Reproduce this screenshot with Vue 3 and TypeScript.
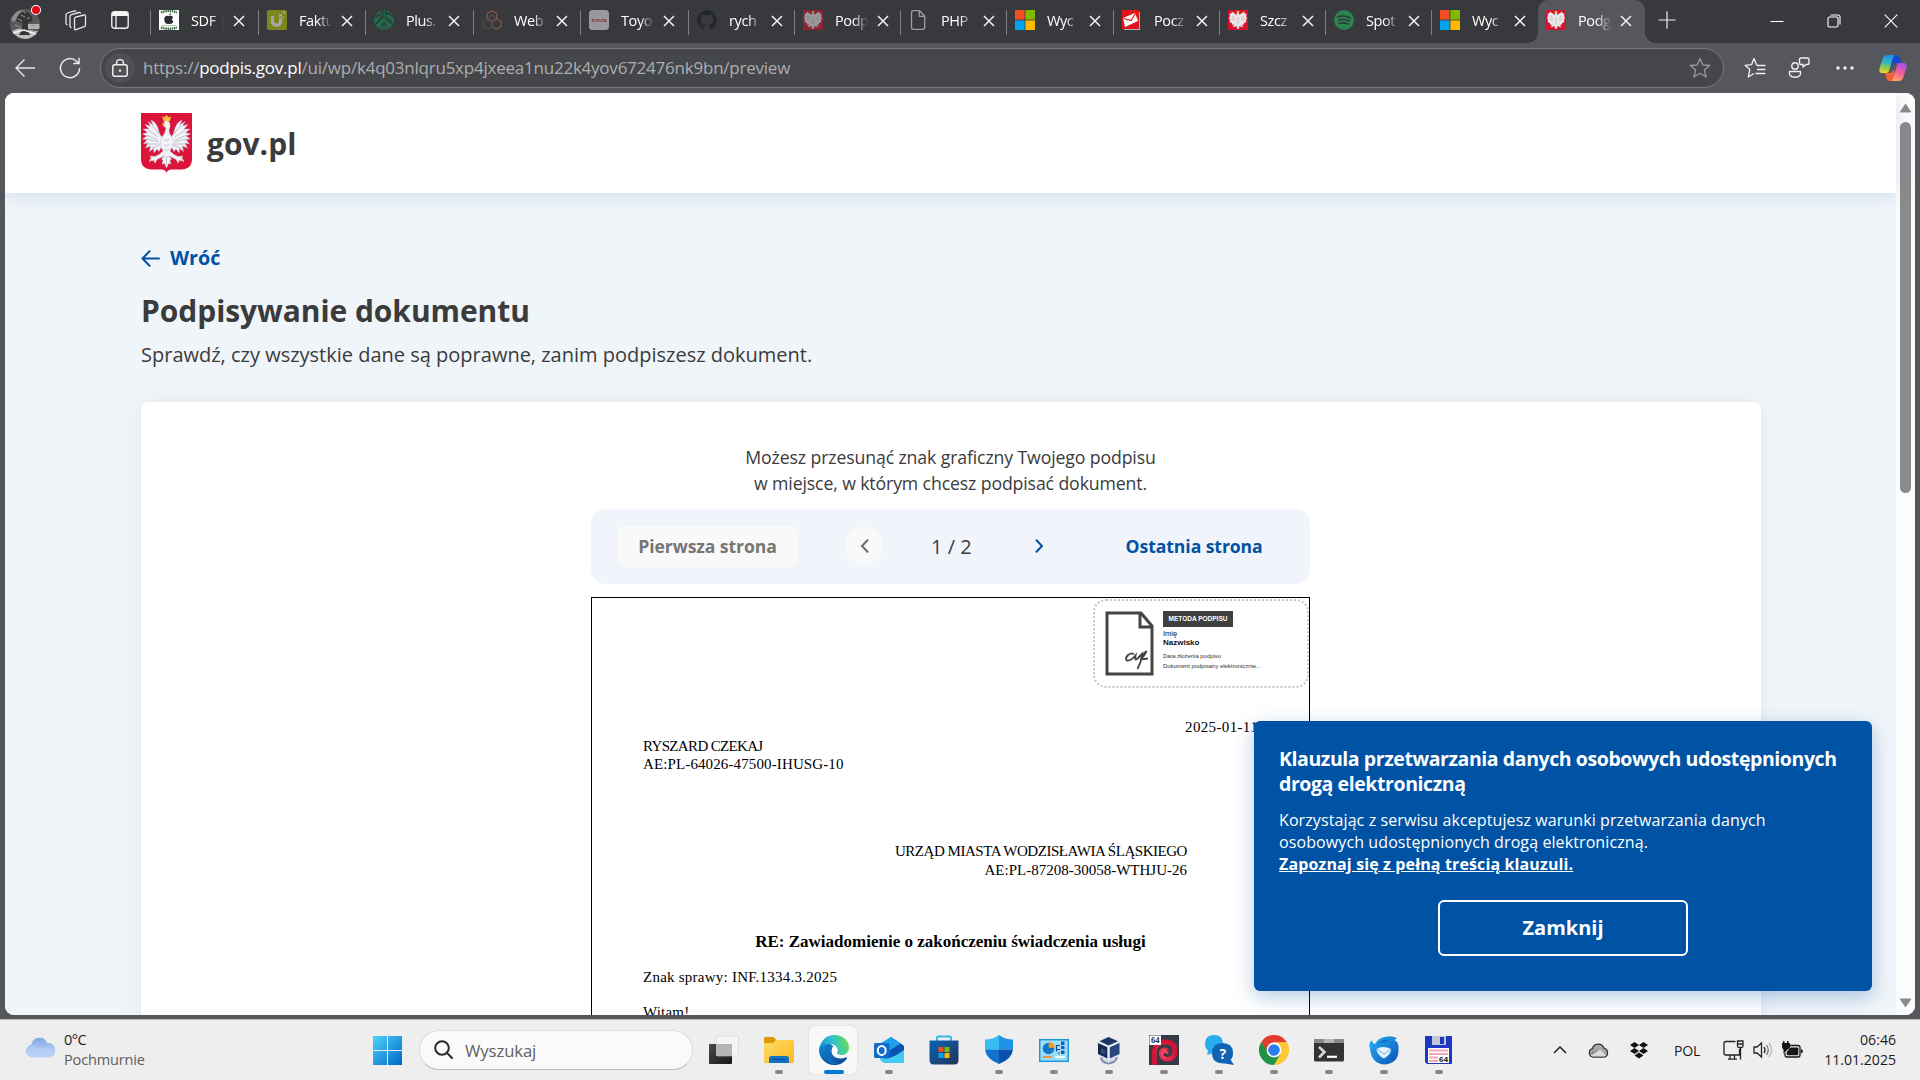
<script setup lang="ts">
interface Tab {
  title: string
  icon: string
  width: number
  dim?: boolean
}

const tabs: Tab[] = [
  { title: 'SDF |', icon: 'fav-apple', width: 108 },
  { title: 'Faktu', icon: 'fav-u', width: 107, dim: true },
  { title: 'Plus.|', icon: 'fav-plus', width: 108, dim: true },
  { title: 'Web', icon: 'fav-hex', width: 107, dim: true },
  { title: 'Toyo', icon: 'fav-toyota', width: 108, dim: true },
  { title: 'rych', icon: 'fav-github', width: 106 },
  { title: 'Podp', icon: 'fav-eagle', width: 106, dim: true },
  { title: 'PHP', icon: 'fav-page', width: 106 },
  { title: 'Wyc', icon: 'fav-ms', width: 107 },
  { title: 'Pocz', icon: 'fav-mail', width: 106 },
  { title: 'Szcz', icon: 'fav-eagle', width: 106 },
  { title: 'Spot', icon: 'fav-spotify', width: 106 },
  { title: 'Wyc', icon: 'fav-ms', width: 106 },
]

interface TaskApp {
  icon: string
  running: boolean
  active?: boolean
}

const apps: TaskApp[] = [
  { icon: 'app-taskview', running: false },
  { icon: 'app-explorer', running: true },
  { icon: 'app-edge', running: true, active: true },
  { icon: 'app-outlook', running: true },
  { icon: 'app-store', running: false },
  { icon: 'app-defender', running: true },
  { icon: 'app-control', running: true },
  { icon: 'app-vbox', running: true },
  { icon: 'app-64', running: true },
  { icon: 'app-help', running: true },
  { icon: 'app-chrome', running: true },
  { icon: 'app-terminal', running: true },
  { icon: 'app-thunderbird', running: true },
  { icon: 'app-floppy', running: true },
]
</script>

<template>
  <svg class="defs" width="0" height="0" aria-hidden="true">
    <defs>
      <linearGradient id="gStart" x1="0" y1="0" x2="1" y2="1"><stop offset="0" stop-color="#4fd3fb" /><stop offset="1" stop-color="#0067c5" /></linearGradient>
      <linearGradient id="gCloud" x1="0" y1="0" x2="0" y2="1"><stop offset="0" stop-color="#7ea6e8" /><stop offset="1" stop-color="#cfe0fa" /></linearGradient>
      <linearGradient id="gFolder" x1="0" y1="0" x2="1" y2="1"><stop offset="0" stop-color="#ffdc6b" /><stop offset="1" stop-color="#fbb91c" /></linearGradient>
      <linearGradient id="gEdgeTop" x1="0" y1="0.6" x2="1" y2="0.4"><stop offset="0" stop-color="#1a92d8" /><stop offset="0.5" stop-color="#2fc0cf" /><stop offset="1" stop-color="#6be04f" /></linearGradient>
      <linearGradient id="gEdgeBot" x1="0" y1="0" x2="0.6" y2="1"><stop offset="0" stop-color="#1590d8" /><stop offset="1" stop-color="#0f4c98" /></linearGradient>
      <linearGradient id="gStore" x1="0" y1="0" x2="1" y2="1"><stop offset="0" stop-color="#0b64b4" /><stop offset="1" stop-color="#253358" /></linearGradient>
      <linearGradient id="gThunder" x1="0" y1="0" x2="1" y2="1"><stop offset="0" stop-color="#29b3f5" /><stop offset="1" stop-color="#0b50b8" /></linearGradient>
      <linearGradient id="gTv" x1="0" y1="0" x2="1" y2="1"><stop offset="0" stop-color="#4a4a4a" /><stop offset="1" stop-color="#161616" /></linearGradient>
      <linearGradient id="gCopA" x1="0.4" y1="0" x2="0.3" y2="1"><stop offset="0" stop-color="#1b8fe8" /><stop offset="0.4" stop-color="#35b8c0" /><stop offset="0.7" stop-color="#8fca4c" /><stop offset="1" stop-color="#f5d31c" /></linearGradient>
      <linearGradient id="gCopB" x1="0.6" y1="0" x2="0.3" y2="1"><stop offset="0" stop-color="#a64fe8" /><stop offset="0.5" stop-color="#f25c9a" /><stop offset="1" stop-color="#fda968" /></linearGradient>
      <radialGradient id="gRed"><stop offset="0" stop-color="#ff4d6a" /><stop offset="1" stop-color="#cf1434" /></radialGradient>

      <symbol id="eagle" viewBox="0 0 51 60">
        <path d="M0 0H51V46Q51 56 40 56.5H30Q26 57 25.5 60Q25 57 21 56.5H11Q0 56 0 46Z" fill="#dc143c" />
        <g fill="#f4f4f8" stroke="#b9b7cb" stroke-width="0.5" stroke-linejoin="round">
          <path d="M22 25Q18 22 17 15Q15 9 10 7Q11 10 12 12L7 8.500L9.500 13L4 11.500L8 16L2 16L6.500 19.500L1.500 21L6 23L1.500 26L6 26.500L2.500 31L7 30L4.500 35L9.500 33L8.500 38.500L12.500 35.500L13 40L16 36L18 38.500L21 33Z" />
          <path d="M29 25Q33 22 34 15Q36 9 41 7Q40 10 39 12L44 8.500L41.500 13L47 11.500L43 16L49 16L44.500 19.500L49.500 21L45 23L49.500 26L45 26.500L48.500 31L44 30L46.500 35L41.500 33L42.500 38.500L38.500 35.500L38 40L35 36L33 38.500L30 33Z" />
          <path d="M24 42L20.500 46L22 47.500L21 51L23.500 50.500L25.500 55L27.500 50.500L30 51L29 47.500L30.500 46L27 42Z" />
          <path d="M23 9Q26 6 28.500 9.500Q30 13 28 17Q27.500 20 31 24Q33.500 31 29 38L33 41.500L37 43.500L42 43L40.500 45.500L43 48L38.500 47.500L37 50L35 46.500L27 42.500L25.500 45L24 42.500L16 46.500L14 50L12.500 47.500L8 48L10.500 45.500L9 43L14 43.500L18 41.500L22 38Q17.500 31 21 24Q24.500 20 25 15L22 12.500Z" />
        </g>
        <path d="M7 17L17 24M5 22L17 27M6 26L18 29M7 31L18 31M11 35L19 32M11 12L18 21M44 17L34 24M46 22L34 27M45 26L33 29M44 31L33 31M40 35L32 32M40 12L33 21M23 26L25.500 28L28 26M23 31L25.500 33L28 31M23 36L25.500 38L28 36M25.500 44V52" fill="none" stroke="#a9a9bf" stroke-width="0.7" />
        <path d="M21 3L23 4.500L25.500 2L28 4.500L30 3L29 8H22.500ZM20.500 11L24 9.800L23.500 12.500Z" fill="#f6c12f" />
        <path d="M10 44.500L8.500 49M41 44.500L42.500 49M13 47L14.500 50M38 47L36.500 50" stroke="#efc487" stroke-width="1" />
      </symbol>

      <symbol id="fav-apple" viewBox="0 0 20 20">
        <rect width="20" height="20" fill="#fff" />
        <path d="M2 2.500Q10-.5 18 2.500M2 17.500Q10 20 18 17.500" stroke="#3d6b45" stroke-width="2.400" fill="none" stroke-dasharray="1.500 .7" />
        <path d="M9.800 6.200C8 5.200 5.200 6 5.200 9.200S7.400 14.600 9.800 13.800C12 14.600 14 12.800 14.300 11.400C12.800 10.500 12.700 8.300 14.100 7.200C13 5.500 11.200 5.600 9.800 6.200ZM9.900 5.500Q10 3.500 12 2.900Q12 5 9.900 5.500Z" fill="#2b2d33" />
        <path d="M3 15.500H17" stroke="#b8cfae" stroke-width="1.200" />
      </symbol>
      <symbol id="fav-u" viewBox="0 0 20 20">
        <rect width="20" height="20" rx="2" fill="#b5c800" />
        <path d="M5.500 6V12A4.200 4.200 0 0 0 13.600 12V8" fill="none" stroke="#fff" stroke-width="3.200" />
        <path d="M12 4H15V7H12ZM16 1.500H18V3.500H16ZM15.500 6.500H17V8H15.500Z" fill="#fff" />
      </symbol>
      <symbol id="fav-plus" viewBox="0 0 20 20">
        <circle cx="10" cy="10" r="10" fill="#0e9a5b" />
        <path d="M1 8L9 1M3 12L9 6M8 8L1 15M11 1L19 7M11 6L18 12M12 9L19 15M6 18L10 12L14 18M9 0V9M11.500 0V9M2 6H9M11 5L16 3M10 14V20" stroke="#2d3834" stroke-width="1.100" fill="none" />
      </symbol>
      <symbol id="fav-hex" viewBox="0 0 20 20">
        <path d="M10 .8L14.800 3.500V9L10 11.800L5.200 9V3.500Z M14.500 8.500L19.200 11.200V16.500L14.500 19.200L9.800 16.500V11.200Z" fill="none" stroke="#d07a4c" stroke-width="1.100" />
        <path d="M5.500 8.500L10 11.200V16.500L5.500 19.200L1 16.500V11.200Z M10 5L13 6.700V10L10 11.800L7 10V6.700Z" fill="none" stroke="#6b5460" stroke-width="1.100" />
      </symbol>
      <symbol id="fav-toyota" viewBox="0 0 20 20">
        <rect width="20" height="20" rx="3.500" fill="#e8e8ea" />
        <text x="10" y="11.800" text-anchor="middle" textLength="16" font-size="4.400" font-weight="bold" font-family="Liberation Sans, sans-serif" fill="#d0142c">TOYOTA</text>
      </symbol>
      <symbol id="fav-github" viewBox="0 0 20 20">
        <path d="M10 .3A10 10 0 0 0 6.800 19.700C7.300 19.800 7.500 19.500 7.500 19.200V17.300C4.700 17.900 4.100 16 4.100 16C3.700 14.900 3 14.500 3 14.500C2.100 13.900 3.100 13.900 3.100 13.900C4.100 14 4.700 15 4.700 15C5.600 16.500 7 16.100 7.600 15.800C7.700 15.200 7.900 14.700 8.200 14.500C6 14.200 3.600 13.400 3.600 9.500C3.600 8.400 4 7.500 4.700 6.800C4.600 6.600 4.200 5.600 4.800 4.200C4.800 4.200 5.600 3.900 7.500 5.200A9 9 0 0 1 12.500 5.200C14.400 3.900 15.200 4.200 15.200 4.200C15.800 5.600 15.400 6.600 15.300 6.800C16 7.500 16.400 8.400 16.400 9.500C16.400 13.400 14 14.200 11.800 14.500C12.200 14.800 12.500 15.400 12.500 16.300V19.200C12.500 19.500 12.700 19.800 13.200 19.700A10 10 0 0 0 10 .3Z" fill="#22262b" />
      </symbol>
      <symbol id="fav-eagle" viewBox="0 0 20 20">
        <rect width="20" height="20" fill="#d5122f" />
        <path d="M8.600 5Q7 3 3.600 1.500L3.800 3L1.500 4L2 6L1 8L2 10L1.700 12L3.700 13L4.500 15L6.500 14.500L4.500 17L7 16.800L9 16L8.500 18L10 19L11.500 18L11 16L13 16.800L15.500 17L13.500 14.500L15.500 15L16.300 13L18.300 12L18 10L19 8L18 6L18.500 4L16.200 3L16.400 1.500Q13 3 11.400 5L11 2.500L9 2.500Z" fill="#e9e6e8" />
        <path d="M4 6L7 8M3.500 9L7 10M16 6L13 8M16.500 9L13 10M10 7V14" stroke="#c3a9b0" stroke-width=".7" />
        <path d="M8.500 1H11.500L11 3H9Z" fill="#e9bf3a" />
      </symbol>
      <symbol id="fav-page" viewBox="0 0 20 20">
        <path d="M4.500 .7H10.500L15.700 6V17.300A2 2 0 0 1 13.700 19.300H4.500A2 2 0 0 1 2.500 17.300V2.700A2 2 0 0 1 4.500 .7ZM10.300 1V6.300H15.500" fill="none" stroke="#9c9da0" stroke-width="1.300" />
      </symbol>
      <symbol id="fav-ms" viewBox="0 0 20 20">
        <path d="M0 0H9.600V9.600H0Z" fill="#f25022" /><path d="M10.400 0H20V9.600H10.400Z" fill="#7fba00" /><path d="M0 10.400H9.600V20H0Z" fill="#00a4ef" /><path d="M10.400 10.400H20V20H10.400Z" fill="#ffb900" />
      </symbol>
      <symbol id="fav-mail" viewBox="0 0 20 20">
        <path d="M2 2H18V20H2Z" fill="#a9b4bb" /><path d="M0 0H17V19H0Z" fill="#e41219" />
        <path d="M1 8L13 3L16 11L3 17Z" fill="#fff" /><path d="M1.500 8.500L9 10.500L13.500 3.500" stroke="#e41219" stroke-width="1.200" fill="none" />
      </symbol>
      <symbol id="fav-spotify" viewBox="0 0 20 20">
        <circle cx="10" cy="10" r="10" fill="#2b8350" />
        <path d="M4 6.800Q10.500 4.800 16 7.800M4.600 10.200Q10.300 8.500 15.200 11M5.200 13.300Q10 12 14.200 14.100" stroke="#34393b" stroke-width="1.700" fill="none" stroke-linecap="round" />
      </symbol>

      <symbol id="app-taskview" viewBox="0 0 30 30">
        <rect x="0" y="9" width="23" height="20" rx="1" fill="url(#gTv)" />
        <rect x="7.500" y="1" width="22" height="20" rx="1" fill="#f5f5f5" stroke="#d2d2d2" stroke-width=".6" />
        <rect x="7.500" y="9" width="15.500" height="12" fill="#b5b5b5" />
      </symbol>
      <symbol id="app-explorer" viewBox="0 0 30 30">
        <path d="M0 3.500Q0 2 1.500 2H9.500L13 5.500V10H0Z" fill="#dd9a06" />
        <path d="M0 8H9L12 5H28.500Q30 5 30 6.500V26.500Q30 28 28.500 28H1.500Q0 28 0 26.500Z" fill="url(#gFolder)" />
        <path d="M5 28V23.500Q5 21 7.500 21H22.500Q25 21 25 23.500V28Z" fill="#1272c4" /><path d="M8.500 24.500H21.500" stroke="#0b4d91" stroke-width="1.300" />
      </symbol>
      <symbol id="app-edge" viewBox="0 0 30 30">
        <path d="M0 14.500A15 15 0 0 0 15.500 30C21.500 30 25.800 27 28 23.200C28.400 22.300 27.500 22 26.800 22.400C21 25 12.700 22.700 12.700 16.800C12.700 14.500 13.500 12.500 14.500 11.500C10 6 1 7 0 14.500Z" fill="url(#gEdgeBot)" />
        <path d="M0 14.500C1 6 7.500 0 15.500 0C24 0 30 6 30 12.500C30 17.500 26.500 20 22.500 20C19 20 17.200 18.800 17.800 17.600C18.400 16.800 18.600 16 18.600 15.300C18.600 11.800 15.600 8.800 10.500 8.800C4 8.800 .6 11.800 0 14.500Z" fill="url(#gEdgeTop)" />
        <path d="M5.500 21C3.500 15 7 9.500 12.500 9.200C8.800 12 8.500 20 14 25.500C16 27.500 19 28 21 28C14 31.500 7.500 27.500 5.500 21Z" fill="#0d6fc0" opacity=".8" />
        <path d="M14.500 11.200C18 12 19.500 15.500 18 17.500Q17.200 19 20 19.700C17 21 12.500 19 12.700 15.500Q12.800 12.500 14.500 11.200Z" fill="#fff" />
      </symbol>
      <symbol id="app-outlook" viewBox="0 0 30 30">
        <path d="M6 12L17 2L30 11V25Q30 28 27 28H12Q6 26 6 22Z" fill="#0a3f93" />
        <path d="M7 8L17 2L27 8.500L15 16Z" fill="#1d9fea" /><path d="M14 17L27 8.500L30 12V16L16 23Z" fill="#0a52b5" />
        <path d="M6 22Q14 27 30 15V25Q30 28 27 28H14Q6 28 6 22Z" fill="#45ccf5" />
        <rect x="0" y="8" width="15.500" height="15" rx="1.500" fill="#0f6cc8" />
        <ellipse cx="7.700" cy="15.500" rx="4" ry="4.500" fill="none" stroke="#fff" stroke-width="2" />
      </symbol>
      <symbol id="app-store" viewBox="0 0 30 30">
        <path d="M8 7V3Q8 1.500 9.500 1.500H20.500Q22 1.500 22 3V7" fill="none" stroke="#38b8ef" stroke-width="2" />
        <path d="M.5 5.500H29.500V25Q29.500 29.500 25 29.500H5Q.5 29.500 .5 25Z" fill="url(#gStore)" />
        <path d="M9.500 12H14.500V17H9.500Z" fill="#f25022" /><path d="M15.500 12H20.500V17H15.500Z" fill="#7fba00" /><path d="M9.500 18H14.500V23H9.500Z" fill="#00a4ef" /><path d="M15.500 18H20.500V23H15.500Z" fill="#ffb900" />
      </symbol>
      <symbol id="app-defender" viewBox="0 0 30 30">
        <path d="M15 0Q21 4.500 29 4.500V14.500H15Z" fill="#1c93e3" /><path d="M15 0Q9 4.500 1 4.500V14.500H15Z" fill="#37bdf3" />
        <path d="M1 14.500H15V29Q2 24 1 14.500Z" fill="#1173cf" /><path d="M29 14.500H15V29Q28 24 29 14.500Z" fill="#0a52ad" />
      </symbol>
      <symbol id="app-control" viewBox="0 0 30 30">
        <rect x=".7" y="4.700" width="28.600" height="21.600" fill="#9fdcf8" stroke="#1d9ad6" stroke-width="1.500" />
        <circle cx="9.500" cy="13.500" r="5.800" fill="#1377c9" /><path d="M9.500 13V7A6 6 0 0 1 15.500 13Z" fill="#f79a23" transform="translate(.3,-.3)" />
        <path d="M18 10.500H21M18 14.500H21M19 18H21M17.500 16.500V10" stroke="#124d91" fill="none" stroke-width="1.200" /><path d="M22 6.500H25.500V10H22ZM22 11H25.500V14H22ZM22 15.500H25.500V19H22Z" fill="#1260ad" />
        <path d="M4 22H13" stroke="#ee8a1c" stroke-width="1.600" /><path d="M16 22H26" stroke="#fff" stroke-width="1.600" /><path d="M14.500 20V24" stroke="#f3b873" />
      </symbol>
      <symbol id="app-vbox" viewBox="0 0 30 30">
        <path d="M6 22Q6 29 14.500 29.500Q23 29 24 22Z" fill="#8995b0" /><path d="M9 24L14.500 27L21 24" fill="none" stroke="#dfe4ee" stroke-width="1.500" />
        <path d="M14.500 .5L27 6V20L14.500 26L2.500 20V6Z" fill="#e7eaf1" />
        <path d="M14.500 2L24 6.200L14.500 10.500L5.500 6.200Z" fill="#1c3764" /><path d="M4 8L13.300 12.300V23.500L4 19Z" fill="#142950" /><path d="M25.500 8L15.800 12.300V23.500L25.500 19Z" fill="#27477d" />
        <path d="M7 13L11 15V20L7 18Z" fill="#2e4c7d" />
      </symbol>
      <symbol id="app-64" viewBox="0 0 30 30">
        <rect width="30" height="30" fill="#343a46" />
        <path d="M6 30Q2 9 14 7Q26 6 26 16Q25.500 25 17.500 24Q12 22.500 12.500 17.500Q14 14 17.500 15.500Q19.500 17 18 19" fill="none" stroke="url(#gRed)" stroke-width="5" />
        <path d="M18.500 15Q22 17 19.500 20.500Q17 22 14.500 19.500" fill="none" stroke="#343a46" stroke-width="1.500" />
        <rect x=".5" y=".5" width="11.500" height="9.500" fill="#fff" /><text x="6.200" y="8.300" text-anchor="middle" font-size="8.500" font-weight="bold" font-family="Liberation Serif, serif" fill="#222">64</text>
      </symbol>
      <symbol id="app-help" viewBox="0 0 30 30">
        <path d="M1 9Q1 0 10 0T19 9Q19 18 10 18L3 20Q4 16 4 15.500Q1 13 1 9Z" fill="#27aeea" />
        <path d="M8 18Q8 8 18.500 8T29 18Q29 23 26.500 24.500L30 30L21 28.500Q8 29 8 18Z" fill="#1164b4" />
        <text x="18.800" y="23.500" text-anchor="middle" font-size="14" font-weight="bold" font-family="Open Sans, sans-serif" fill="#fff">?</text>
      </symbol>
      <symbol id="app-chrome" viewBox="0 0 30 30">
        <path d="M2 7.500A15 15 0 0 1 28 7.500H15L9 18Z" fill="#e33b2e" /><path d="M28 7.500A15 15 0 0 1 15 30L21.500 18.500L21 8Z" fill="#fcc934" /><path d="M2 7.500A15 15 0 0 0 15 30L21.500 18.700L12 20Z" fill="#1e9447" />
        <path d="M15 7.500H28L21 19Z" fill="#fcc934" /><circle cx="15" cy="15" r="7.400" fill="#fff" /><circle cx="15" cy="15" r="5.800" fill="#2b7de9" />
      </symbol>
      <symbol id="app-terminal" viewBox="0 0 30 30">
        <rect y="4" width="30" height="22.500" rx="1.500" fill="#333" /><path d="M1.500 4H28.500Q30 4 30 5.500V8H0V5.500Q0 4 1.500 4Z" fill="#8a8a8a" /><path d="M10 4H20V8H10Z" fill="#b4b4b4" />
        <path d="M5 12L10.500 17L5 22.500" fill="none" stroke="#d8d8d8" stroke-width="2.500" /><path d="M13 21.800H23" stroke="#fff" stroke-width="2.200" />
      </symbol>
      <symbol id="app-thunderbird" viewBox="0 0 30 30">
        <path d="M1 13Q-1 8 3 5Q3 8 6 9Q9 3 16 2Q22 0 28 3L25.500 5Q30 7 29.500 14Q30 28 16 29.500Q2 29 1 13Z" fill="url(#gThunder)" />
        <path d="M7.500 14Q14 10 22 14Q22.500 19 15 23.500Q8 20 7.500 14Z" fill="#e8f3fd" /><path d="M8 14L15 19L22 14" fill="none" stroke="#9cc8ee" stroke-width="1.500" /><path d="M10 8Q15 3 20 5Q16 8 10 8Z" fill="#1266c5" />
      </symbol>
      <symbol id="app-floppy" viewBox="0 0 30 30">
        <path d="M1 1H28V29H3L1 27Z" fill="#1b37c4" /><path d="M8 1H22V10H8Z" fill="#c3c7d1" /><path d="M16 2H20V9H16Z" fill="#1b37c4" />
        <path d="M4 13H25V28H4Z" fill="#fff" /><path d="M5 15.500H24M5 19H24M5 22.500H14M5 26H14" stroke="#f3a7b0" stroke-width="1.800" />
        <text x="19.500" y="27" text-anchor="middle" font-size="8" font-weight="bold" font-family="Liberation Mono, monospace" fill="#111">64</text>
      </symbol>
    </defs>
  </svg>

  <div class="screen">
    <header class="tabstrip">
      <svg class="avatar" width="32" height="34" viewBox="0 0 32 34">
        <circle cx="15" cy="15" r="15" transform="translate(0,4)" fill="#5a5a5a" />
        <path d="M2 26Q10 22 15 24T28 26Q23 34 15 34Q6 33 2 26Z" fill="#bdbdbd" />
        <path d="M18 19H29Q30 22 29 24H18Z" fill="#b2b2b2" /><path d="M1 14Q5 6 12 5L10 13L3 17Z" fill="#8d8d8d" />
        <path d="M10 8Q16 4 20 9Q23 11 22 16L18 18Q17 24 20 30H9Q13 24 12 18L6 16Q7 11 10 8Z" fill="#343434" />
        <path d="M11 10L15 12M17 14L20 12M8 14L12 16M21 21L26 20M5 20L10 22M20 25L26 27M13 6L16 8" stroke="#9a9a9a" /><path d="M3 28L14 25L26 29" stroke="#eee" stroke-width="1.500" fill="none" />
        <circle cx="26" cy="5" r="5" fill="#fff" /><circle cx="26" cy="5" r="4" fill="#e30613" />
      </svg>
      <svg class="workspaces" width="22" height="22" viewBox="0 0 22 22" fill="none" stroke="#e8e8e8" stroke-width="1.300" stroke-linejoin="round">
        <path d="M9.500 8.500Q9.500 7.500 10.500 7.200L19 5Q20.500 4.800 20.500 6V15Q20.500 16.300 19.300 16.700L11 19.700Q9.500 20 9.500 18.700Z" />
        <path d="M6.500 17.500Q5 17.500 5 16V6.500Q5 5 6.500 4.600L14 2.500Q15.500 2.300 15.800 3.500M2.500 15Q1 14.500 1 13V5Q1 3.500 2.500 3L9.500 .9Q10.500 .7 11.200 1.500" />
      </svg>
      <svg class="tabactions" width="18" height="18" viewBox="0 0 18 18"><rect x=".8" y=".8" width="16.400" height="16.400" rx="2.500" fill="none" stroke="#f0f0f0" stroke-width="1.400" /><path d="M1 5V3Q1 1 3 1H15Q17 1 17 3V5Z" fill="#f4f4f4" /><path d="M5 5V17" stroke="#f0f0f0" stroke-width="1.300" /></svg>
      <div class="tabs">
        <div v-for="(tab, i) in tabs" :key="i" class="tab" :style="{ width: tab.width + 'px' }">
          <svg class="favicon" :class="{ dim: tab.dim }" width="20" height="20"><use :href="'#' + tab.icon" /></svg>
          <span class="tab-title">{{ tab.title }}</span>
          <svg class="close" width="12" height="12" viewBox="0 0 12 12"><path d="M1 1L11 11M11 1L1 11" stroke="#f2f2f2" stroke-width="1.500" /></svg>
        </div>
        <div class="tab current">
          <svg class="favicon" width="20" height="20"><use href="#fav-eagle" /></svg>
          <span class="tab-title">Podg</span>
          <svg class="close" width="12" height="12" viewBox="0 0 12 12"><path d="M1 1L11 11M11 1L1 11" stroke="#f2f2f2" stroke-width="1.500" /></svg>
        </div>
      </div>
      <svg class="newtab" width="18" height="18" viewBox="0 0 18 18"><path d="M9 .5V17.500M.5 9H17.500" stroke="#f0f0f0" stroke-width="1.200" /></svg>
      <div class="window-controls">
        <svg width="14" height="14" viewBox="0 0 14 14"><path d="M.5 7.500H13.500" stroke="#fff" stroke-width="1.100" /></svg>
        <svg width="14" height="14" viewBox="0 0 14 14" fill="none" stroke="#fff" stroke-width="1.100"><rect x="1" y="3" width="10" height="10" rx="1.500" /><path d="M3.500 1H11Q13 1 13 3V10.500" /></svg>
        <svg width="14" height="14" viewBox="0 0 14 14"><path d="M.7 .7L13.300 13.300M13.300 .7L.7 13.300" stroke="#fff" stroke-width="1.100" /></svg>
      </div>
    </header>

    <div class="toolbar">
      <svg class="back" width="20" height="20" viewBox="0 0 20 20" fill="none" stroke="#e8e8e8" stroke-width="1.400"><path d="M20 10H1M9.500 1.500L1 10L9.500 18.500" /></svg>
      <svg class="reload" width="22" height="22" viewBox="0 0 22 22" fill="none" stroke="#e8e8e8" stroke-width="1.500"><path d="M20.500 11A9.500 9.500 0 1 1 17.500 4.200L19.500 6.200M20 .8V6.500H14.300" /></svg>
      <div class="address">
        <span class="site-info"><svg width="16" height="19" viewBox="0 0 16 19" fill="none" stroke="#f0f0f0" stroke-width="1.500"><rect x=".8" y="5.800" width="14.400" height="11.400" rx="2" /><path d="M4.500 5.500V4A3.500 3.500 0 0 1 11.500 4V5.500" /><circle cx="8" cy="11.500" r="1.200" fill="#f0f0f0" stroke="none" /></svg></span>
        <span class="url">https://<b>podpis.gov.pl</b>/ui/wp/k4q03nlqru5xp4jxeea1nu22k4yov672476nk9bn/preview</span>
        <svg class="star" width="22" height="22" viewBox="0 0 22 22"><path d="M11 1.500L13.800 8L20.700 8.500L15.400 13L17.100 20L11 16.300L4.900 20L6.600 13L1.300 8.500L8.200 8Z" fill="none" stroke="#97989b" stroke-width="1.300" stroke-linejoin="round" /></svg>
      </div>
      <svg class="favs" width="22" height="22" viewBox="0 0 22 22" fill="none" stroke="#f0f0f0" stroke-width="1.300" stroke-linejoin="round" stroke-linecap="round"><path d="M14 8.500L12.700 8L10 1.500L7.500 7.700L1 8.300L5.800 12.600L4.300 20L9.500 16.800M13.500 8.500H21M13.500 12.500H21M12 16.500H21" /></svg>
      <svg class="people" width="22" height="22" viewBox="0 0 22 22" fill="none" stroke="#f0f0f0" stroke-width="1.400" stroke-linejoin="round"><circle cx="7" cy="9" r="3.200" /><path d="M1.500 14.500H12.500Q13.500 20.300 7 20.300T1.500 14.500ZM13 1H19.500Q21 1 21 2.500V6Q21 7.500 19.500 7.500H18L15 10V7.500H13Q11.500 7.500 11.500 6V2.500Q11.500 1 13 1Z" /></svg>
      <svg class="dots" width="18" height="4" viewBox="0 0 18 4" fill="#f4f4f4"><circle cx="2" cy="2" r="1.700" /><circle cx="9" cy="2" r="1.700" /><circle cx="16" cy="2" r="1.700" /></svg>
      <svg class="copilot" width="28" height="26" viewBox="0 0 28 26">
        <path d="M13 0H18Q20.500 .5 21.500 5L22.500 8H17Q14 8 13 12L9 0Z" fill="#1746c8" /><path d="M15 26H10Q7.500 25 6.800 21L6 18H11Q13 18 14.500 14L18 26Z" fill="#f2603a" />
        <path d="M8 0H16Q14.500 1 13.500 4L10 16Q9.500 18 7.500 18H3Q-.5 18 .5 13.500L3.500 4Q5 0 8 0Z" fill="url(#gCopA)" />
        <path d="M20 26H12.500Q14 25 14.500 22L18 10Q18.800 8 20.500 8H25Q28.500 8.300 27.500 12.500L24.500 22Q23 26 20 26Z" fill="url(#gCopB)" />
      </svg>
    </div>

    <div class="frame">
      <div class="viewport">
        <div class="page">
          <div class="site-header">
            <svg width="51" height="60"><use href="#eagle" /></svg>
            <span class="brand">gov.pl</span>
          </div>
          <main>
            <a class="backlink"><svg width="19" height="17" viewBox="0 0 19 17" fill="none" stroke="#0052a5" stroke-width="2" stroke-linecap="round" stroke-linejoin="round"><path d="M18 8.500H1.500M8.500 1.300L1.500 8.500L8.500 15.700" /></svg><span>Wróć</span></a>
            <h1>Podpisywanie dokumentu</h1>
            <p class="lead">Sprawdź, czy wszystkie dane są poprawne, zanim podpiszesz dokument.</p>
            <section class="card">
              <p class="hint">Możesz przesunąć znak graficzny Twojego podpisu<br />w miejsce, w którym chcesz podpisać dokument.</p>
              <nav class="pager">
                <span class="first">Pierwsza strona</span>
                <span class="prev"><svg width="9" height="14" viewBox="0 0 9 14"><path d="M7.500 1.200L2 7L7.500 12.800" fill="none" stroke="#6c6c6c" stroke-width="2" stroke-linecap="round" /></svg></span>
                <span class="count">1 / 2</span>
                <svg class="next" width="9" height="14" viewBox="0 0 9 14"><path d="M1.500 1.200L7 7L1.500 12.800" fill="none" stroke="#0052a5" stroke-width="2" stroke-linecap="round" /></svg>
                <span class="last">Ostatnia strona</span>
              </nav>
              <article class="doc">
                <div class="stamp">
                  <svg width="50" height="66" viewBox="0 0 50 66" fill="none" stroke="#444" stroke-width="3"><path d="M2 2H36L47 15V63H2ZM35 2V16H47" /><path d="M29 43.500Q27 41 23 44Q19.500 48 22 49.500Q26 50 30.500 44.500Q29.500 50 32 48L37 43L36.500 46.500Q38.500 46.500 41.500 40Q37 44 35.500 51L32.500 58M35 48.500L43 47.500" stroke-width="1.900" /></svg>
                  <div class="stamp-text">
                    <span class="method">METODA PODPISU</span>
                    <span class="fname">Imię</span>
                    <b>Nazwisko</b>
                    <span class="small s1">Data złożenia podpisu</span>
                    <span class="small">Dokument podpisany elektronicznie...</span>
                  </div>
                </div>
                <p class="date">2025-01-11</p>
                <p class="sender"><span class="name">RYSZARD CZEKAJ</span><br /><span class="ae">AE:PL-64026-47500-IHUSG-10</span></p>
                <p class="recipient"><span class="office">URZĄD MIASTA WODZISŁAWIA ŚLĄSKIEGO</span><br /><span>AE:PL-87208-30058-WTHJU-26</span></p>
                <h2>RE: Zawiadomienie o zakończeniu świadczenia usługi</h2>
                <p class="sign">Znak sprawy: INF.1334.3.2025</p>
                <p class="greet">Witam!</p>
              </article>
            </section>
          </main>
        </div>
        <div class="scrollbar">
          <svg width="13" height="10" viewBox="0 0 13 10"><path d="M6.500 .5L12 8.500Q12.500 9.500 11.500 9.500H1.500Q.5 9.500 1 8.500Z" fill="#8b8b8b" /></svg>
          <div class="thumb"></div>
          <svg class="down" width="13" height="10" viewBox="0 0 13 10"><path d="M6.500 9.500L1 1.500Q.5 .5 1.500 .5H11.500Q12.500 .5 12 1.500Z" fill="#8b8b8b" /></svg>
        </div>
        <aside class="notice">
          <h3>Klauzula przetwarzania danych osobowych udostępnionych<br />drogą elektroniczną</h3>
          <p>Korzystając z serwisu akceptujesz warunki przetwarzania danych<br />osobowych udostępnionych drogą elektroniczną.<br /><a>Zapoznaj się z pełną treścią klauzuli.</a></p>
          <button>Zamknij</button>
        </aside>
      </div>
    </div>

    <footer class="taskbar">
      <svg class="weather" width="31" height="21" viewBox="0 0 31 21"><path d="M7 20.500A6.500 6.500 0 0 1 6.500 7.600A8 8 0 0 1 22 6.200A7.200 7.200 0 0 1 24 20.500Z" fill="url(#gCloud)" /><path d="M1 14Q4 8 10 10Q13 14 20 11Q26 10 30 15Q29 20 24 20.500H7Q1 19 1 14Z" fill="#b5cdf4" opacity=".7" /></svg>
      <div class="weather-text"><span class="temp">0°C</span><br /><span class="desc">Pochmurnie</span></div>
      <svg class="start" width="29" height="29" viewBox="0 0 29 29" fill="url(#gStart)"><path d="M0 0H14V14H0ZM15 0H29V14H15ZM0 15H14V29H0ZM15 15H29V29H15Z" /></svg>
      <div class="search"><svg width="19" height="19" viewBox="0 0 19 19" fill="none" stroke="#2a2a2a" stroke-width="2"><circle cx="8" cy="8" r="6.800" /><path d="M12.800 12.800L18 18" stroke-linecap="round" /></svg><span>Wyszukaj</span></div>
      <div class="apps">
        <div v-for="app in apps" :key="app.icon" class="app" :class="{ active: app.active }">
          <svg width="30" height="30"><use :href="'#' + app.icon" /></svg>
          <i v-if="app.running"></i>
        </div>
      </div>
      <div class="tray">
        <svg class="chev" width="14" height="8" viewBox="0 0 14 8"><path d="M1 7L7 1L13 7" fill="none" stroke="#222" stroke-width="1.500" /></svg>
        <svg class="cloud" width="21" height="15" viewBox="0 0 21 15"><path d="M5 14A4.300 4.300 0 0 1 4.500 5.600A6 6 0 0 1 16 5.200A4.600 4.600 0 0 1 16.500 14Z" fill="#a9a9a9" stroke="#333" stroke-width="1.300" /><path d="M2.500 12.500L12 6.500L18 12.500L16.500 13.400H5Z" fill="#dcdcdc" /><path d="M2.500 9L11 7L4 12Z" fill="#8a8a8a" /></svg>
        <svg class="dropbox" width="18" height="17" viewBox="0 0 18 17" fill="#111"><path d="M4.500 0L9 3L4.500 6L0 3ZM13.500 0L18 3L13.500 6L9 3ZM4.500 6L9 9L4.500 12L0 9ZM13.500 6L18 9L13.500 12L9 9ZM9 10.500L13.500 13.500L9 16.500L4.500 13.500Z" /></svg>
        <span class="lang">POL</span>
        <svg class="net" width="21" height="20" viewBox="0 0 21 20" fill="none" stroke="#222" stroke-width="1.300"><path d="M12.500 1.500H3Q1 1.500 1 3.500V13Q1 15 3 15H16.500V9M7 15V19M11.500 15V19M5 19.200H14M17.500 7V19.500" /><path d="M14.500 1H20V6Q20 7.500 18.500 7.500H16Q14.500 7.500 14.500 6ZM14.500 4H20" /></svg>
        <svg class="vol" width="20" height="18" viewBox="0 0 20 18" fill="none" stroke="#222" stroke-width="1.300"><path d="M1 6H4L8.500 2V16L4 12H1ZM11 6Q13 9 11 12" /><path d="M13.500 4Q17 9 13.500 14" stroke="#777" /><path d="M16 2Q21 9 16 16" stroke="#bbb" /></svg>
        <svg class="bat" width="21" height="18" viewBox="0 0 21 18"><path d="M8 4.500H16Q18 4.500 18 6.500V14Q18 16 16 16H5Q3 16 3 14V12" fill="none" stroke="#161616" stroke-width="1.300" /><path d="M8.500 6.500H15.500Q16.300 6.500 16.300 7.300V13.200Q16.300 14.200 15.500 14.200H5.500Q4.700 14 4.700 13V11Z" fill="#161616" /><path d="M19 8Q20.800 8.500 20.800 10.200T19 12.500Z" fill="#161616" /><path d="M2.500 0V2H5V0H6.500V2H8V6Q8 8 5.500 8.500L1.500 13V8.500Q0 7.500 0 6V2H1V0Z" fill="#161616" /></svg>
        <div class="clock"><span>06:46</span><br /><span>11.01.2025</span></div>
      </div>
    </footer>
  </div>
</template>

<style>
body { margin: 0; overflow: hidden; background: #eee; }
</style>

<style scoped>
* { box-sizing: border-box; }
p, h1, h2, h3 { margin: 0; }
svg { display: block; flex: none; }
.defs { position: absolute; }
.screen { width: 1920px; height: 1080px; display: flex; flex-direction: column; font-family: "Open Sans", "Noto Sans", sans-serif; overflow: hidden; }

.tabstrip { height: 43px; background: #38393d; display: flex; align-items: flex-start; flex: none; }
.avatar { margin: 5px 0 0 10px; }
.workspaces { margin: 10px 0 0 23px; }
.tabactions { margin: 11px 0 0 24px; }
.tabs { display: flex; margin-left: 22px; }
.tab { height: 43px; display: flex; align-items: center; padding: 0 0 3px 8px; position: relative; flex: none; }
.tab::before { content: ""; position: absolute; left: -1px; top: 10px; width: 1px; height: 25px; background: #808184; }
.favicon.dim { opacity: .55; }
.tab-title { width: 34px; margin-left: 12px; white-space: nowrap; font-size: 14.500px; letter-spacing: -.4px; color: #fff; -webkit-mask-image: linear-gradient(90deg, #000 55%, transparent 98%); mask-image: linear-gradient(90deg, #000 55%, transparent 98%); }
.close { margin: 1px 0 0 8px; }
.current { width: 107px; background: #56575c; border-radius: 10px 10px 0 0; }
.current::before { left: -10px; top: 33px; width: 10px; height: 10px; background: radial-gradient(circle at 0 0, transparent 9.500px, #56575c 10px); }
.current::after { content: ""; position: absolute; right: -10px; top: 33px; width: 10px; height: 10px; background: radial-gradient(circle at 100% 0, transparent 9.500px, #56575c 10px); }
.newtab { margin: 11px 0 0 13px; }
.window-controls { margin: 14px 22px 0 auto; display: flex; gap: 43px; }

.toolbar { height: 50px; background: #56575c; display: flex; align-items: center; flex: none; }
.back { margin-left: 15px; }
.reload { margin-left: 24px; }
.address { margin-left: 19px; width: 1624px; height: 40px; border-radius: 20px; background: #45464a; border: 1px solid #77787c; display: flex; align-items: center; padding: 0 12px 0 4px; }
.site-info { width: 30px; height: 30px; border-radius: 50%; background: #505155; display: flex; align-items: center; justify-content: center; }
.url { margin: 0 0 2px 8px; font-size: 17px; letter-spacing: -.23px; color: #acadaf; white-space: nowrap; }
.url b { font-weight: 400; color: #fff; }
.star { margin-left: auto; }
.favs { margin-left: 20px; }
.people { margin-left: 22px; }
.dots { margin-left: 26px; }
.copilot { margin-left: 25px; }

.frame { flex: 1; background: #56575c; padding: 0 5px 4px; border-bottom: 1px solid #b9babc; }
.viewport { height: 922px; border-radius: 9px; overflow: hidden; display: flex; position: relative; background: #fcfcfc; }
.page { width: 1891px; background: #f0f5f9; }
.site-header { height: 100px; background: #fff; box-shadow: 0 2px 20px rgba(0, 82, 165, .15); display: flex; align-items: center; padding-left: 136px; position: relative; }
.brand { margin: 2px 0 0 15px; font-size: 30px; line-height: 40px; font-weight: 700; color: #3b3b3b; }
main { padding: 50px 135px 0 136px; color: #3b3b3b; }
.backlink { display: flex; align-items: center; gap: 10px; font-size: 19.800px; line-height: 30px; font-weight: 700; color: #0052a5; }
h1 { margin-top: 18px; font-size: 30px; line-height: 40px; font-weight: 700; letter-spacing: -.06px; }
.lead { margin-top: 9px; font-size: 20px; line-height: 30px; white-space: nowrap; }
.card { margin-top: 32px; height: 640px; padding: 42px 1px 0 0; background: #fff; border-radius: 6px; box-shadow: 0 2px 20px rgba(0, 82, 165, .08); display: flex; flex-direction: column; align-items: center; }
.hint { font-size: 17.700px; line-height: 26px; letter-spacing: -.13px; text-align: center; }
.pager { margin-top: 13px; width: 719px; height: 75px; border-radius: 14px; background: #f1f5fb; display: flex; align-items: center; padding: 0 0 1px 27px; font-size: 17.600px; flex: none; }
.first { width: 179px; height: 41px; border-radius: 6px; background: #f9f9f9; color: #767676; font-weight: 700; letter-spacing: -.08px; display: flex; align-items: center; justify-content: center; }
.prev { margin-left: 48px; width: 38px; height: 38px; border-radius: 50%; background: #f9f9f9; display: flex; align-items: center; justify-content: center; }
.count { margin-left: 48px; font-size: 20px; }
.next { margin-left: 63px; }
.last { margin-left: 82px; font-weight: 700; letter-spacing: -.08px; color: #0052a5; }

.doc { margin-top: 13px; width: 719px; height: 600px; border: 1px solid #000; position: relative; padding: 120px 51px 0; font-family: "Liberation Serif", serif; font-size: 15px; line-height: 18px; color: #000; flex: none; }
.stamp { position: absolute; right: 0; top: 1px; width: 216px; height: 89px; border: 2px dotted #c6c6c6; border-radius: 13px; display: flex; padding: 10px 0 0 10px; font-family: "Liberation Sans", sans-serif; }
.stamp-text { margin: 0 0 0 8px; display: flex; flex-direction: column; align-items: flex-start; white-space: nowrap; color: #111; }
.method { width: 70px; height: 16px; background: #404040; color: #fff; font-size: 6.500px; line-height: 16px; text-align: center; font-weight: 700; }
.fname { margin-top: 2px; font-size: 7.500px; line-height: 9px; }
.stamp b { font-size: 8px; line-height: 9px; }
.small { font-size: 5.900px; line-height: 10px; color: #333; }
.s1 { margin-top: 4px; }
.date { text-align: right; letter-spacing: .35px; }
.sender { margin-top: 1px; }
.name { letter-spacing: -.66px; }
.ae { letter-spacing: .12px; }
.recipient { margin-top: 69px; padding-right: 71px; line-height: 19px; text-align: right; }
.office { letter-spacing: -.46px; }
h2 { margin-top: 52px; font-size: 17px; line-height: 20px; text-align: center; }
.sign { margin-top: 16px; letter-spacing: .24px; }
.greet { margin-top: 17px; letter-spacing: .2px; }

.scrollbar { width: 19px; background: #fcfcfc; display: flex; flex-direction: column; align-items: center; padding: 10px 0 7px; }
.thumb { width: 11px; height: 371px; margin-top: 9px; border-radius: 6px; background: #8b8b8b; }
.down { margin-top: auto; }

.notice { position: absolute; left: 1249px; top: 628px; width: 618px; height: 270px; background: #0052a5; border-radius: 6px; box-shadow: 0 6px 20px rgba(0, 82, 165, .3); padding: 25px; color: #fff; display: flex; flex-direction: column; }
h3 { font-size: 19.500px; line-height: 25px; font-weight: 700; white-space: nowrap; letter-spacing: -.42px; }
.notice p { margin-top: 13px; font-size: 16px; line-height: 22px; white-space: nowrap; letter-spacing: .1px; }
.notice a { font-weight: 700; text-decoration: underline; letter-spacing: .13px; }
.notice button { margin-top: 25px; align-self: center; width: 250px; height: 56px; border: 2px solid #fff; border-radius: 6px; background: none; padding: 0 0 2px; color: #fff; font: 700 20px "Open Sans", sans-serif; flex: none; }

.taskbar { height: 60px; background: #eee; display: flex; align-items: center; flex: none; color: #1c1c1c; }
.weather { margin-left: 25px; margin-bottom: 5px; }
.weather-text { margin-left: 8px; width: 309px; font-size: 14.500px; line-height: 20px; }
.temp { letter-spacing: -.5px; }
.desc { color: #5c5c5c; letter-spacing: -.15px; }
.search { margin-left: 17px; width: 274px; height: 40px; border-radius: 20px; background: #fafafa; border: 1px solid #dcdcdc; border-bottom-color: #bbb; display: flex; align-items: center; gap: 12px; padding: 0 0 1px 14px; font-size: 16.700px; color: #616161; }
.search span { margin-top: 2px; letter-spacing: -.1px; }
.apps { margin-left: 3px; display: flex; }
.app { width: 55px; height: 48px; display: flex; flex-direction: column; align-items: center; padding-top: 9px; position: relative; }
.app i { width: 8px; height: 4px; border-radius: 2px; background: #868686; margin-top: 5px; }
.active::before { content: ""; position: absolute; z-index: 0; left: 3px; top: 0; width: 48px; height: 48px; border-radius: 5px; background: #f8f8f8; box-shadow: 0 0 1px #aaa; }
.active svg, .active i { position: relative; }
.active i { width: 20px; background: #0078d4; }
.tray { display: flex; align-items: center; margin-left: auto; padding-right: 24px; font-size: 14.100px; }
.cloud { margin-left: 21px; }
.dropbox { margin-left: 21px; }
.lang { margin-left: 26px; letter-spacing: -.2px; }
.net { margin-left: 23px; }
.vol { margin-left: 9px; }
.bat { margin-left: 9px; }
.clock { margin-left: 21px; text-align: right; line-height: 20px; }
</style>
